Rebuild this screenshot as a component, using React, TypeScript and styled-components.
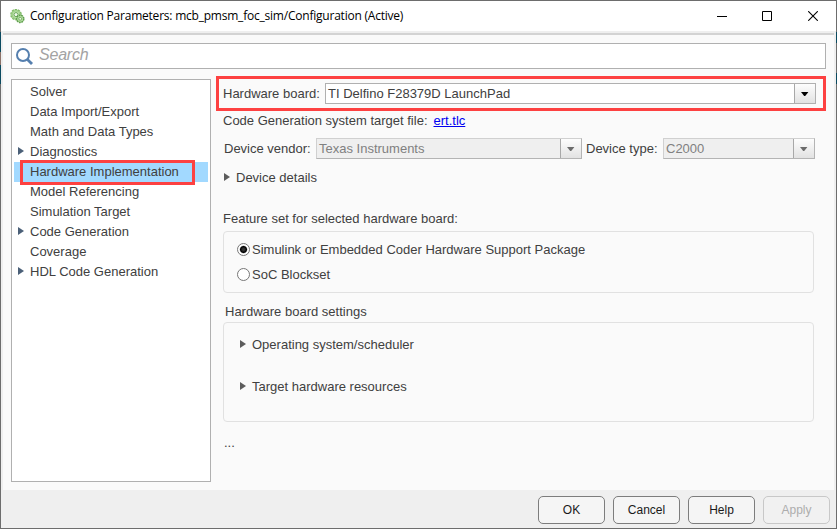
import React from "react";
import styled, { createGlobalStyle, css } from "styled-components";

const GlobalStyle = createGlobalStyle`
  * { box-sizing: border-box; }
  html, body { margin: 0; padding: 0; overflow: hidden; }
  body { font-family: "Liberation Sans", Arial, sans-serif; font-size: 13px; color: #404040; }
`;

const Desktop = styled.div`
  width: 837px;
  height: 529px;
  padding: 1px;
  background:
    linear-gradient(#6d6d6d 32px, #0b4a60 32px 43px, #6d6d6d 43px 73px, #0b4a60 73px 84px, #6d6d6d 84px) right / 1px 100% no-repeat,
    linear-gradient(#6d6d6d 32px, #0b4a60 32px 52px, #8d7268 52px 65px, #0b4a60 65px 84px, #6d6d6d 84px) left / 1px 100% no-repeat,
    #6d6d6d;
`;

const Window = styled.div`
  display: flex;
  flex-direction: column;
  height: 527px;
  background: #efefef;
  white-space: nowrap;
`;

const TitleBar = styled.header`
  display: flex;
  align-items: center;
  height: 30px;
  padding-left: 9px;
  background: #fff;
  color: #000;
`;

const Title = styled.h1`
  flex: 1;
  margin: 0 0 0 5px;
  font: 400 12px/28px "Open Sans", "Noto Sans", sans-serif;
  letter-spacing: -0.22px;
`;

const WindowControl = styled.div`
  width: 46px;
  height: 28px;
  display: flex;
  align-items: center;
  justify-content: center;
`;

const Content = styled.main`
  display: flex;
  flex-direction: column;
  height: 457px;
  margin: 2px 2px 0;
  padding: 8px 8px 8px;
  border-top: 2px solid #d3d3d3;
  background: #fafafa;
`;

const SearchBox = styled.div`
  display: flex;
  align-items: center;
  height: 26px;
  flex: none;
  width: 815px;
  padding-left: 3px;
  border: 1px solid #b0b0b0;
  background: #fff;
`;

const Placeholder = styled.span`
  margin: -2px 0 0 5px;
  font-size: 16px;
  letter-spacing: -0.2px;
  font-style: italic;
  color: #a3a3a3;
`;

const Columns = styled.div`
  display: flex;
  align-items: flex-start;
  margin-top: 7px;
`;

const Tree = styled.nav`
  width: 200px;
  height: 403px;
  flex: none;
  margin: 3px 5px 0 0;
  padding: 2px;
  border: 1px solid #b0b0b0;
  background: #fff;
`;

const TreeRow = styled.div<{ $selected?: boolean }>`
  position: relative;
  display: flex;
  align-items: center;
  width: 194px;
  height: 20px;
  padding: 0 0 2px 4px;
  background: ${(p) => (p.$selected ? "#a2d9ff" : "transparent")};
`;

const ArrowSlot = styled.span`
  display: flex;
  width: 12px;
  flex: none;
`;

const RowHighlight = styled.span`
  position: absolute;
  left: 6px;
  top: -2px;
  width: 175px;
  height: 25px;
  border: 3px solid #fd4141;
`;

const Panel = styled.section`
  display: flex;
  flex-direction: column;
  width: 610px;
`;

const BoardRow = styled.div`
  display: flex;
  align-items: center;
  height: 35px;
  padding: 0 7px 0 4px;
  border: 3px solid #fd4141;
`;

const Line = styled.div<{ $h: number; $left?: number; $top?: number }>`
  display: flex;
  align-items: center;
  height: ${(p) => p.$h}px;
  margin-top: ${(p) => p.$top ?? 0}px;
  padding-left: ${(p) => p.$left ?? 7}px;
`;

const Label = styled.label<{ $w?: number }>`
  width: ${(p) => (p.$w ? `${p.$w}px` : "auto")};
  flex: none;
`;

const Link = styled.a`
  margin-left: 6px;
  color: #0000f0;
  text-decoration: underline;
`;

const ComboFrame = styled.div<{ $w: number; $disabled?: boolean }>`
  display: flex;
  align-items: center;
  width: ${(p) => p.$w}px;
  height: 21px;
  flex: none;
  padding-left: 2px;
  border: 1px solid #b0b0b0;
  background: #fff;
  ${(p) =>
    p.$disabled &&
    css`
      border-color: #d0d0d0 #b4b4b4 #b4b4b4 #d0d0d0;
      background: #efefef;
      color: #808080;
    `}
`;

const ComboValue = styled.span`
  flex: 1;
`;

const ComboButton = styled.span`
  display: flex;
  align-items: center;
  justify-content: center;
  width: 21px;
  height: 19px;
  padding-top: 1px;
  border-left: 1px solid #a8a8a8;
  background: linear-gradient(#fdfdfd, #e2e2e2);
`;

const Group = styled.div<{ $h: number; $top: number }>`
  height: ${(p) => p.$h}px;
  width: 591px;
  margin: ${(p) => p.$top}px 0 0 7px;
  border: 1px solid #e1e1e1;
  border-radius: 4px;
`;

const Radio = styled.span<{ $on?: boolean }>`
  width: 13px;
  height: 13px;
  margin-right: 2px;
  flex: none;
  border: 1px solid #777;
  border-radius: 50%;
  background: ${(p) =>
    p.$on ? "radial-gradient(circle at 50% 50%, #333 0 1px, #000 3px, #fff 4.2px)" : "#fff"};
`;

const Footer = styled.footer`
  display: flex;
  justify-content: flex-end;
  gap: 8px;
  padding: 6px 6px 0;
`;

const Button = styled.button`
  width: 67px;
  height: 28px;
  padding: 0;
  border: 1px solid #7d7d7d;
  border-radius: 5px;
  background: #f5f5f5;
  font: 12px "Liberation Sans", Arial, sans-serif;
  color: #1a1a1a;
  &:disabled {
    border-color: #c8c8c8;
    background: #f1f1f1;
    color: #adadad;
  }
`;

const Expander = ({ color }: { color: string }) => (
  <svg width="6" height="8" viewBox="0 0 6 8">
    <path d="M0 0L6 4L0 8Z" fill={color} />
  </svg>
);

const GearIcon = () => (
  <svg width="15" height="15" viewBox="0 0 15 15">
    <circle cx="6" cy="5.6" r="5" fill="#c3e3b1" stroke="#7db765" strokeWidth="1.6" strokeDasharray="2.2 .9" />
    <circle cx="6" cy="5.6" r="3.9" fill="none" stroke="#9fd088" strokeWidth="1.5" />
    <circle cx="6" cy="5.6" r="2" fill="#f3faef" stroke="#5f9f4e" strokeWidth=".9" />
    <circle cx="10.2" cy="9.8" r="3.6" fill="#b4dda0" stroke="#5f9e4d" strokeWidth="1.5" strokeDasharray="1.8 .7" />
    <circle cx="10.2" cy="9.8" r="1.4" fill="#edf7e6" stroke="#67a755" strokeWidth=".8" />
  </svg>
);

const SearchIcon = () => (
  <svg width="19" height="19" viewBox="0 0 19 19">
    <circle cx="8" cy="8" r="6" fill="#fff" stroke="#557fae" strokeWidth="2" />
    <path d="M12.2 12.2L17 17" stroke="#557fae" strokeWidth="2.8" />
  </svg>
);

interface ComboProps {
  width: number;
  value: string;
  disabled?: boolean;
}

const Combo = ({ width, value, disabled }: ComboProps) => (
  <ComboFrame $w={width} $disabled={disabled}>
    <ComboValue>{value}</ComboValue>
    <ComboButton>
      <svg width="8" height="4" viewBox="0 0 8 4">
        <path d="M0 0H7.4L4.2 4H3.2Z" fill={disabled ? "#6b6b6b" : "#000"} />
      </svg>
    </ComboButton>
  </ComboFrame>
);

const treeItems = [
  { name: "Solver" },
  { name: "Data Import/Export" },
  { name: "Math and Data Types" },
  { name: "Diagnostics", expandable: true },
  { name: "Hardware Implementation", selected: true },
  { name: "Model Referencing" },
  { name: "Simulation Target" },
  { name: "Code Generation", expandable: true },
  { name: "Coverage" },
  { name: "HDL Code Generation", expandable: true },
];

export default function App() {
  return (
    <Desktop>
      <GlobalStyle />
      <Window>
        <TitleBar>
          <GearIcon />
          <Title>Configuration Parameters: mcb_pmsm_foc_sim/Configuration (Active)</Title>
          <WindowControl>
            <svg width="12" height="10" viewBox="0 0 12 10">
              <path d="M2 5.5H12" stroke="#000" />
            </svg>
          </WindowControl>
          <WindowControl>
            <svg width="10" height="10" viewBox="0 0 10 10">
              <path d="M.5 .5H9.5V9.5H.5Z" fill="none" stroke="#000" />
            </svg>
          </WindowControl>
          <WindowControl>
            <svg width="10" height="10" viewBox="0 0 10 10">
              <path d="M.2 .2L9.8 9.8M9.8 .2L.2 9.8" stroke="#000" strokeWidth="1.1" />
            </svg>
          </WindowControl>
        </TitleBar>
        <Content>
          <SearchBox>
            <SearchIcon />
            <Placeholder>Search</Placeholder>
          </SearchBox>
          <Columns>
            <Tree>
              {treeItems.map((item) => (
                <TreeRow key={item.name} $selected={item.selected}>
                  <ArrowSlot>{item.expandable && <Expander color="#4b6078" />}</ArrowSlot>
                  {item.name}
                  {item.selected && <RowHighlight />}
                </TreeRow>
              ))}
            </Tree>
            <Panel>
              <BoardRow>
                <Label $w={102}>Hardware board:</Label>
                <Combo width={491} value="TI Delfino F28379D LaunchPad" />
              </BoardRow>
              <Line $h={18}>
                <Label>Code Generation system target file:</Label>
                <Link>ert.tlc</Link>
              </Line>
              <Line $h={21} $top={9} $left={8}>
                <Label $w={92}>Device vendor:</Label>
                <Combo width={266} value="Texas Instruments" disabled />
                <Line as="span" $h={21} $left={4}>
                  <Label $w={77}>Device type:</Label>
                </Line>
                <Combo width={152} value="C2000" disabled />
              </Line>
              <Line $h={20} $top={8} $left={8}>
                <ArrowSlot>
                  <Expander color="#5c5c5c" />
                </ArrowSlot>
                Device details
              </Line>
              <Line $h={20} $top={21}>
                Feature set for selected hardware board:
              </Line>
              <Group $h={62} $top={3}>
                <Line $h={25} $top={5} $left={13}>
                  <Radio $on />
                  Simulink or Embedded Coder Hardware Support Package
                </Line>
                <Line $h={25} $left={13}>
                  <Radio />
                  SoC Blockset
                </Line>
              </Group>
              <Line $h={20} $top={8} $left={9}>
                Hardware board settings
              </Line>
              <Group $h={100} $top={1}>
                <Line $h={20} $top={11} $left={16}>
                  <ArrowSlot>
                    <Expander color="#5c5c5c" />
                  </ArrowSlot>
                  Operating system/scheduler
                </Line>
                <Line $h={20} $top={22} $left={16}>
                  <ArrowSlot>
                    <Expander color="#5c5c5c" />
                  </ArrowSlot>
                  Target hardware resources
                </Line>
              </Group>
              <Line $h={20} $top={10} $left={8}>
                ...
              </Line>
            </Panel>
          </Columns>
        </Content>
        <Footer>
          <Button>OK</Button>
          <Button>Cancel</Button>
          <Button>Help</Button>
          <Button disabled>Apply</Button>
        </Footer>
      </Window>
    </Desktop>
  );
}
